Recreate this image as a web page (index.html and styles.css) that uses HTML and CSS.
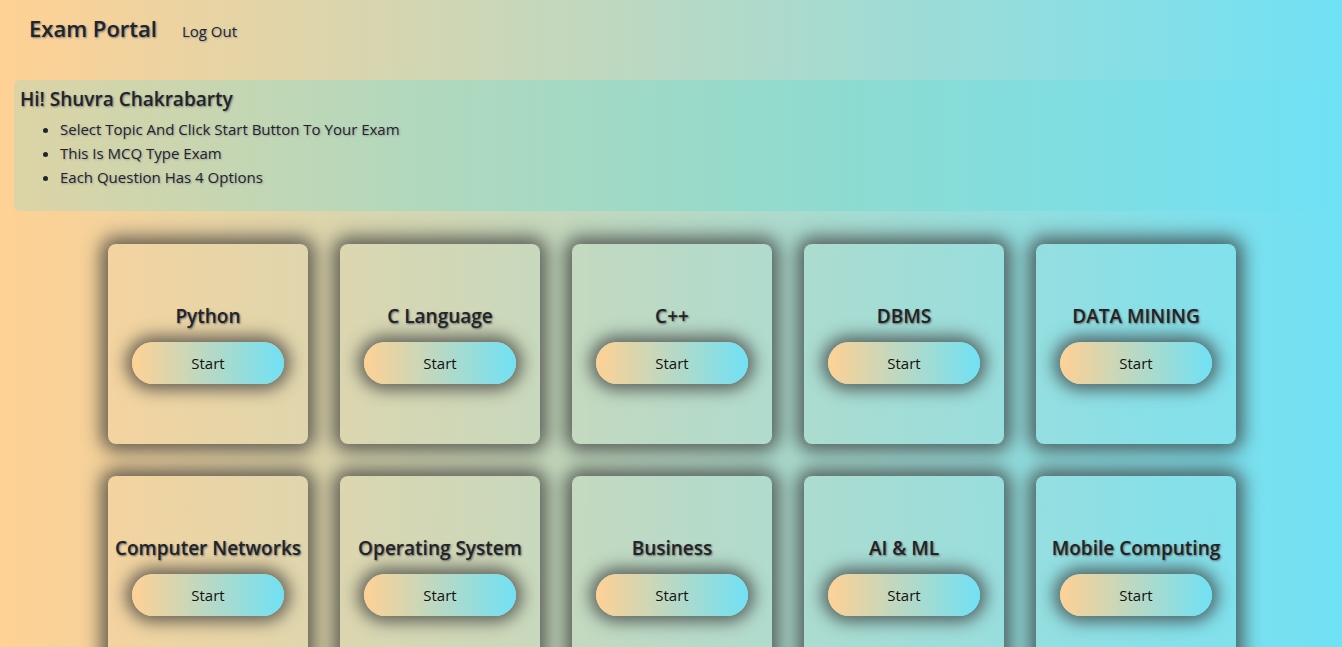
FILE: index.html
```html
<!DOCTYPE html>
<html lang="en">
<head>
<meta charset="utf-8">
<title>Exam Portal</title>
<link rel="stylesheet" href="styles.css">
</head>
<body>
<nav class="navbar">
  <a class="brand" href="#">Exam Portal</a>
  <a class="nav-link" href="#">Log Out</a>
</nav>
<section class="intro">
  <h4 class="greeting">Hi! Shuvra Chakrabarty</h4>
  <ul class="rules">
    <li>Select Topic And Click Start Button To Your Exam</li>
    <li>This Is MCQ Type Exam</li>
    <li>Each Question Has 4 Options</li>
  </ul>
</section>
<main class="topics">
  <div class="card"><h5 class="card-title">Python</h5><button class="start">Start</button></div>
  <div class="card"><h5 class="card-title">C Language</h5><button class="start">Start</button></div>
  <div class="card"><h5 class="card-title">C++</h5><button class="start">Start</button></div>
  <div class="card"><h5 class="card-title">DBMS</h5><button class="start">Start</button></div>
  <div class="card"><h5 class="card-title">DATA MINING</h5><button class="start">Start</button></div>
  <div class="card"><h5 class="card-title">Computer Networks</h5><button class="start">Start</button></div>
  <div class="card"><h5 class="card-title">Operating System</h5><button class="start">Start</button></div>
  <div class="card"><h5 class="card-title">Business</h5><button class="start">Start</button></div>
  <div class="card"><h5 class="card-title">AI &amp; ML</h5><button class="start">Start</button></div>
  <div class="card"><h5 class="card-title">Mobile Computing</h5><button class="start">Start</button></div>
</main>
</body>
</html>
```
FILE: styles.css
```css
* { box-sizing: border-box; }
html, body { margin: 0; padding: 0; }
body {
  font-family: "Open Sans", "Noto Sans", "Liberation Sans", sans-serif;
  font-size: 15px;
  line-height: 24px;
  color: #212529;
  background: linear-gradient(to right, #ffd194, #70e1f5);
  min-height: 100vh;
  overflow: hidden;
}
a { color: #212529; text-decoration: none; }
.navbar {
  display: flex;
  align-items: center;
  height: 56px;
  padding: 0 0 0 29px;
}
.brand {
  font-size: 22px;
  font-weight: 600;
  text-shadow: 1px 1px 2px #7a7a7a;
  margin-right: 25px;
}
.nav-link {
  font-size: 15px;
  margin-top: 6px;
  text-shadow: 1px 1px 2px #9a9a9a;
}
.intro {
  margin: 24px 14px 0 14px;
  height: 131px;
  padding: 6px 6px;
  border-radius: 6px;
  background: linear-gradient(to right, #dcd4a5, #b2d8bd 30%, #8edbcf 62%, #70e1f5);
}
.greeting {
  margin: 0;
  font-size: 19px;
  font-weight: 600;
  line-height: 26px;
  text-shadow: 1px 1px 2px #7a7a7a;
}
.rules {
  margin: 5px 0 0 0;
  padding-left: 40px;
  text-shadow: 1px 1px 2px #9a9a9a;
}
.topics {
  display: flex;
  flex-wrap: wrap;
  justify-content: center;
  gap: 32px;
  padding: 33px 0 33px 2px;
}
.card {
  width: 200px;
  height: 200px;
  border-radius: 8px;
  background: rgba(255, 255, 255, 0.04);
  box-shadow: 0 0 18px 7px rgba(55, 55, 55, 0.75);
  display: flex;
  flex-direction: column;
  align-items: center;
  justify-content: center;
}
.card-title {
  margin: 0 0 14px 0;
  font-size: 19px;
  font-weight: 600;
  line-height: 24px;
  white-space: nowrap;
  text-shadow: 1px 1px 2px #6a6a6a;
}
.start {
  width: 152px;
  height: 42px;
  border: none;
  border-radius: 21px;
  font-family: inherit;
  font-size: 15px;
  color: #111;
  background: linear-gradient(to right, #ffd194, #70e1f5);
  box-shadow: 0 0 16px 6px rgba(55, 55, 55, 0.72);
  cursor: pointer;
}
```
